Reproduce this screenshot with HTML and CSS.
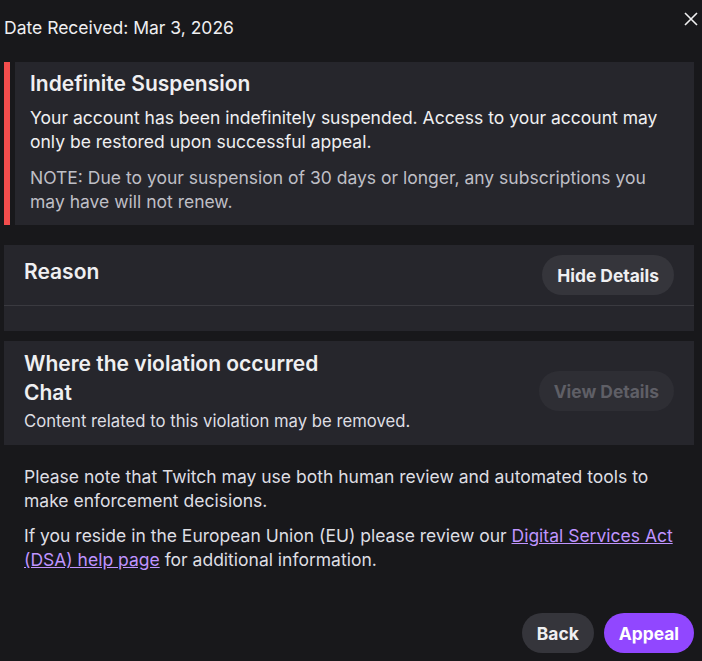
FILE: index.html
```html
<!DOCTYPE html>
<html lang="en">
<head>
<meta charset="utf-8">
<title>Suspension Details</title>
<link rel="stylesheet" href="styles.css">
</head>
<body>
<div class="modal">
  <div class="header">
    <div class="date">Date Received: Mar 3, 2026</div>
    <button class="close" aria-label="Close">
      <svg width="14" height="14" viewBox="0 0 14 14"><path d="M1 1L13 13M13 1L1 13" stroke="#efeff1" stroke-width="1.6" fill="none"/></svg>
    </button>
  </div>

  <div class="alert">
    <div class="alert-bar"></div>
    <div class="alert-box">
      <h2 class="alert-title">Indefinite Suspension</h2>
      <p class="alert-text">Your account has been indefinitely suspended. Access to your account may only be restored upon successful appeal.</p>
      <p class="alert-note">NOTE: Due to your suspension of 30 days or longer, any subscriptions you may have will not renew.</p>
    </div>
  </div>

  <div class="card reason">
    <div class="card-head">
      <h3 class="card-title">Reason</h3>
      <button class="pill">Hide Details</button>
    </div>
    <div class="card-body"></div>
  </div>

  <div class="card where">
    <div class="where-text">
      <h3 class="card-title tall">Where the violation occurred</h3>
      <div class="card-title tall">Chat</div>
      <div class="where-sub">Content related to this violation may be removed.</div>
    </div>
    <button class="pill disabled">View Details</button>
  </div>

  <div class="notes">
    <p>Please note that Twitch may use both human review and automated tools to make enforcement decisions.</p>
    <p>If you reside in the European Union (EU) please review our <a href="#">Digital Services Act (DSA) help page</a> for additional information.</p>
  </div>

  <div class="actions">
    <button class="pill back">Back</button>
    <button class="pill primary">Appeal</button>
  </div>
</div>
</body>
</html>
```

FILE: styles.css
```css
* { box-sizing: border-box; }
html, body {
  margin: 0;
  background: #18181b;
  color: #efeff1;
  font-family: "Inter", "Noto Sans", sans-serif;
}
.modal {
  padding: 0 8px 8px 4px;
  width: 702px;
  height: 661px;
  display: flex;
  flex-direction: column;
}
.header {
  display: flex;
  justify-content: space-between;
  align-items: flex-start;
  height: 62px;
  flex: none;
}
.date {
  margin-top: 17px;
  font-size: 17.5px;
  line-height: 22px;
  color: #efeff1;
}
.close {
  margin-top: 12px;
  margin-right: -4px;
  padding: 0;
  border: 0;
  background: none;
  width: 14px;
  height: 14px;
  display: block;
}
.close svg { display: block; }

.alert {
  display: flex;
  gap: 5px;
}
.alert-bar {
  width: 6px;
  background: #f34d4d;
  flex: none;
}
.alert-box {
  flex: 1;
  background: #26262c;
  padding: 10px 15px 11px 15px;
}
.alert-title {
  margin: 0 0 10px;
  font-size: 21px;
  line-height: 24px;
  font-weight: 600;
  color: #efeff1;
}
.alert-text {
  margin: 0 0 12px;
  font-size: 17.5px;
  line-height: 24px;
  color: #efeff1;
}
.alert-note {
  margin: 0;
  font-size: 17.5px;
  line-height: 24px;
  color: #bfbfc6;
}

.card {
  background: #26262c;
}
.reason {
  margin-top: 20px;
}
.card-head {
  display: flex;
  justify-content: space-between;
  align-items: flex-start;
  padding: 10px 20px;
  border-bottom: 1px solid #3a3a40;
}
.card-title {
  margin: 5px 0 0;
  font-size: 21px;
  line-height: 24px;
  font-weight: 600;
  color: #efeff1;
}
.card-body {
  height: 25px;
}
.pill {
  height: 40px;
  border: 0;
  border-radius: 20px;
  padding: 0 15px;
  font-family: "Inter", "Noto Sans", sans-serif;
  font-size: 17.4px;
  font-weight: 700;
  color: #efeff1;
  background: #35353b;
  cursor: pointer;
}
.where {
  margin-top: 10px;
  display: flex;
  justify-content: space-between;
  align-items: center;
  padding: 8px 20px 12px 20px;
}
.card-title.tall {
  margin: 0;
  line-height: 29px;
}
.where-sub {
  margin-top: 2px;
  font-size: 16.7px;
  line-height: 24px;
  color: #dedee3;
}
.pill.disabled {
  background: #2e2e34;
  color: #5f5f66;
  cursor: default;
}
.notes {
  padding: 20px 20px 0 20px;
}
.notes p {
  margin: 0 0 11px;
  font-size: 17.5px;
  line-height: 24px;
  color: #dedee3;
}
.notes a {
  color: #bf94ff;
  text-decoration: underline;
}
.actions {
  display: flex;
  justify-content: flex-end;
  gap: 10px;
  margin-top: auto;
}
.pill.primary {
  background: #9147ff;
  color: #ffffff;
}
```
